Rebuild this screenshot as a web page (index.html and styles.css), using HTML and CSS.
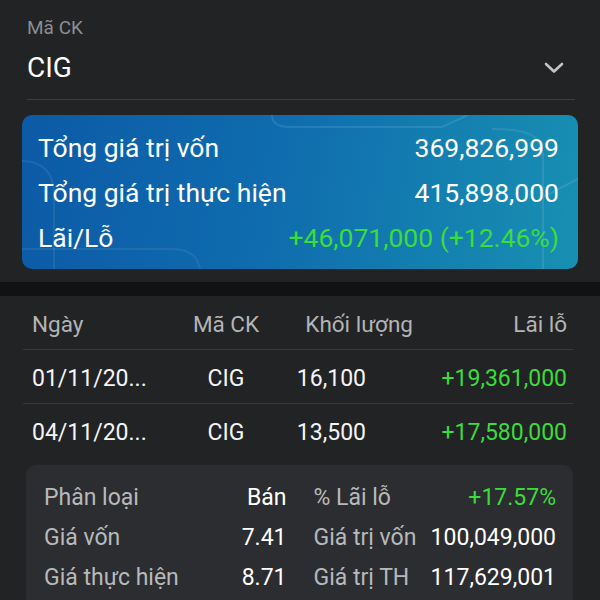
FILE: index.html
```html
<!DOCTYPE html>
<html lang="vi">
<head>
  <meta charset="UTF-8">
  <title>Lãi lỗ đã thực hiện</title>
  <link rel="stylesheet" href="styles.css">
</head>
<body>

  <div class="top">
    <div class="field">
      <div class="field-label">Mã CK</div>
      <div class="field-value">
        <span>CIG</span>
        <svg class="chevron" width="22" height="14" viewBox="0 0 22 14">
          <path d="M3 3 L11 10.5 L19 3" fill="none" stroke="#c4c5c7" stroke-width="2.6" stroke-linecap="round" stroke-linejoin="round"/>
        </svg>
      </div>
    </div>

    <div class="summary">
      <svg class="summary-bg" width="556" height="154" viewBox="0 0 556 154">
        <path d="M250 0 C250 8 256 12 268 12 L420 12 L446 0" fill="none" stroke="rgba(255,255,255,0.10)" stroke-width="2"/>
        <path d="M0 46 C20 46 32 58 32 78 L32 154" fill="none" stroke="rgba(255,255,255,0.08)" stroke-width="2"/>
        <path d="M0 134 L150 134 C168 134 176 142 178 154" fill="none" stroke="rgba(255,255,255,0.07)" stroke-width="2"/>
        <path d="M470 14 C510 14 521 22 521 44 L521 154" fill="none" stroke="rgba(255,255,255,0.09)" stroke-width="2"/>
        <path d="M521 82 L556 64" fill="none" stroke="rgba(255,255,255,0.10)" stroke-width="2"/>
      </svg>
      <div class="summary-row">
        <span>Tổng giá trị vốn</span>
        <span>369,826,999</span>
      </div>
      <div class="summary-row">
        <span>Tổng giá trị thực hiện</span>
        <span>415,898,000</span>
      </div>
      <div class="summary-row">
        <span>Lãi/Lỗ</span>
        <span class="up">+46,071,000 (+12.46%)</span>
      </div>
    </div>
  </div>

  <div class="band"></div>

  <div class="list">
    <div class="row head">
      <div class="c-date">Ngày</div>
      <div class="c-code">Mã CK</div>
      <div class="c-vol">Khối lượng</div>
      <div class="c-pl">Lãi lỗ</div>
    </div>
    <div class="row">
      <div class="c-date">01/11/20...</div>
      <div class="c-code">CIG</div>
      <div class="c-vol">16,100</div>
      <div class="c-pl up">+19,361,000</div>
    </div>
    <div class="row last">
      <div class="c-date">04/11/20...</div>
      <div class="c-code">CIG</div>
      <div class="c-vol">13,500</div>
      <div class="c-pl up">+17,580,000</div>
    </div>

    <div class="detail">
      <div class="pair"><span class="k">Phân loại</span><span class="v">Bán</span></div>
      <div class="pair"><span class="k">% Lãi lỗ</span><span class="v up">+17.57%</span></div>
      <div class="pair"><span class="k">Giá vốn</span><span class="v">7.41</span></div>
      <div class="pair"><span class="k">Giá trị vốn</span><span class="v">100,049,000</span></div>
      <div class="pair"><span class="k">Giá thực hiện</span><span class="v">8.71</span></div>
      <div class="pair"><span class="k">Giá trị TH</span><span class="v">117,629,001</span></div>
    </div>
  </div>

</body>
</html>
```

FILE: styles.css
```css
body {
  margin: 0;
  font-family: Roboto, "Liberation Sans", sans-serif;
  background-color: #222325;
  color: #f2f2f2;
  height: 600px;
  overflow: hidden;
}

.up {
  color: #3bdc3b;
}

/* top: symbol select + summary card */

.top {
  padding-bottom: 13px;
}

.field {
  margin: 0 25px 0 27px;
  padding-top: 17px;
  border-bottom: 1px solid #3c3d40;
}

.field-label {
  font-size: 19px;
  line-height: 22px;
  color: #8c8d90;
}

.field-value {
  display: flex;
  justify-content: space-between;
  align-items: center;
  margin-top: 13px;
  padding-bottom: 15px;
  font-size: 28px;
  line-height: 32px;
  color: #ffffff;
}

.chevron {
  margin-right: 10px;
}

.summary {
  position: relative;
  margin: 15px 22px 0 22px;
  height: 154px;
  box-sizing: border-box;
  padding: 10px 19px 9px 16px;
  border-radius: 10px;
  background: linear-gradient(100deg, #0c5aa6 0%, #0f6cae 45%, #1890b2 100%);
  overflow: hidden;
}

.summary-bg {
  position: absolute;
  left: 0;
  top: 0;
}

.summary-row {
  position: relative;
  display: flex;
  justify-content: space-between;
  align-items: center;
  height: 45px;
  font-size: 26.5px;
  color: #ffffff;
}

.band {
  height: 14px;
  background-color: #121213;
}

/* trade list */

.list {
  padding: 0 27px 0 23px;
}

.row {
  display: grid;
  grid-template-columns: 144px 100px 147px 1fr;
  align-items: center;
  height: 53px;
  padding: 3px 6px 0 9px;
  box-sizing: border-box;
  height: 54px;
  border-bottom: 1px solid #37383b;
  font-size: 23px;
  color: #f4f4f4;
}

.row.last {
  border-bottom: none;
}

.row.head {
  font-size: 22.5px;
  color: #b3b4b6;
}

.c-code {
  text-align: center;
}

.c-vol {
  text-align: right;
  padding-right: 57px;
}

.head .c-vol {
  padding-right: 10px;
  white-space: nowrap;
}

.c-pl {
  text-align: right;
}

.detail {
  display: grid;
  grid-template-columns: 1fr 1fr;
  column-gap: 27px;
  margin: 7px 0 0 3px;
  padding: 12px 17px 20px 18px;
  background-color: #2c2d30;
  border-radius: 10px;
}

.pair {
  display: flex;
  justify-content: space-between;
  align-items: center;
  height: 40px;
  font-size: 23px;
}

.pair .k {
  color: #b8b9bb;
}

.pair .v {
  color: #ffffff;
}

.pair .v.up {
  color: #3bdc3b;
}
```
